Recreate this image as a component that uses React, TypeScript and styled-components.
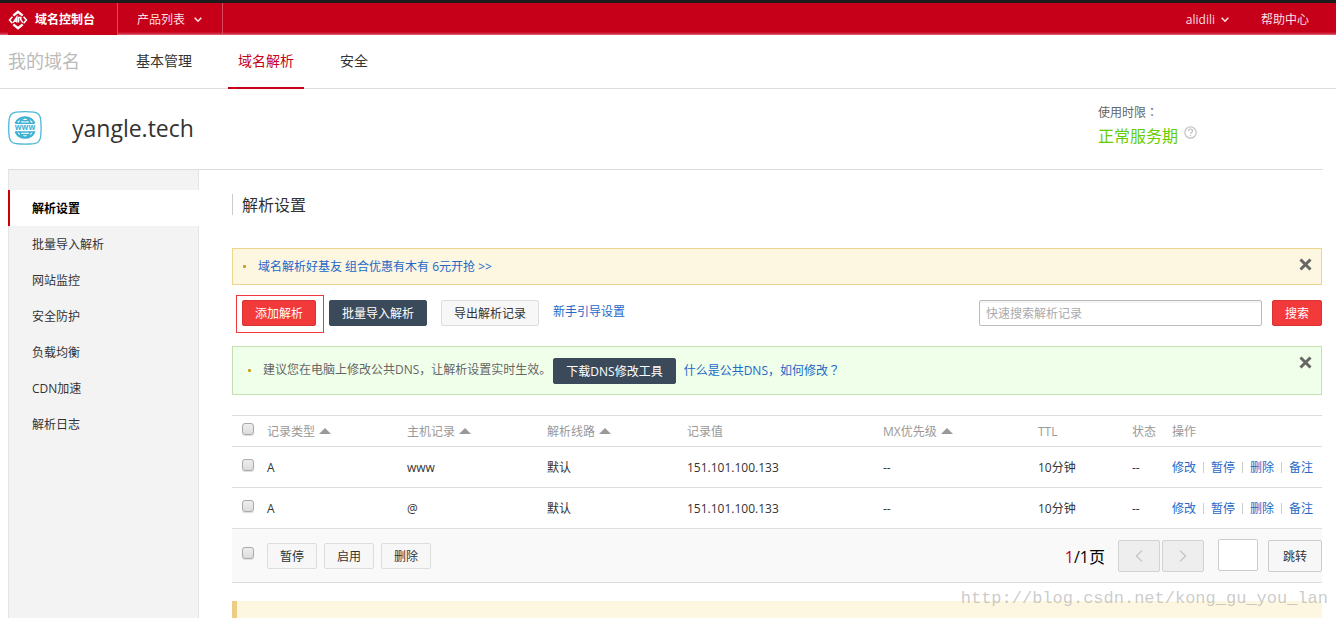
import React from "react";
import styled, { createGlobalStyle } from "styled-components";

const Global = createGlobalStyle`
  *, *::before, *::after { box-sizing: border-box; }
  html { background: #fff; }
  body { margin: 0; }
  body, button, input {
    font-family: "Open Sans", "Noto Sans CJK SC", sans-serif;
    font-size: 12px;
    line-height: 18px;
    color: #333;
  }
  a { color: #2468c8; text-decoration: none; }
  h1, h2, p, ul { margin: 0; padding: 0; font-weight: 400; list-style: none; }
`;

const Page = styled.div`
  position: relative;
  display: flex;
  flex-direction: column;
  min-height: 100vh;
  overflow: hidden;
`;

const TopBar = styled.header`
  display: flex;
  align-items: stretch;
  height: 35px;
  border-top: 3px solid #1c1c1c;
  background: linear-gradient(#c70019 29px, #d43c50 31px, #df7280 32px);
`;

const Brand = styled.a`
  display: flex;
  align-items: center;
  gap: 7px;
  margin-left: 8px;
  padding: 1px 22px 0 0;
  border-right: 1px solid #d94a5c;
  background: #c70019;
  color: #fff;
  font-weight: 700;
`;

const TopMenu = styled.button`
  display: flex;
  align-items: center;
  gap: 9px;
  padding: 2px 20px 0 19px;
  border: 0;
  border-right: 1px solid #d94a5c;
  background: none;
  color: #f9dfe2;
`;

const TopRight = styled.div`
  display: flex;
  align-items: center;
  gap: 32px;
  margin-left: auto;
  padding: 2px 27px 0 0;
`;

const UserMenu = styled.button`
  display: flex;
  align-items: center;
  gap: 6px;
  padding: 0;
  border: 0;
  background: none;
  color: #f9dfe2;
`;

const HelpLink = styled.a`
  color: #f9dfe2;
`;

const NavBar = styled.nav`
  display: flex;
  height: 54px;
  padding-left: 8px;
  border-bottom: 1px solid #ddd;
`;

const NavTitle = styled.span`
  width: 118px;
  color: #bbb;
  font-size: 18px;
  line-height: 52px;
`;

const Tabs = styled.div`
  display: flex;
  gap: 26px;
  margin-bottom: -1px;
`;

const Tab = styled.a<{ $active?: boolean }>`
  padding: 0 10px;
  border-bottom: 2px solid ${(p) => (p.$active ? "#c70019" : "transparent")};
  color: ${(p) => (p.$active ? "#c70019" : "#333")};
  font-size: 14px;
  line-height: 52px;
`;

const DomainHeader = styled.section`
  display: flex;
  align-items: flex-start;
  height: 81px;
  margin: 0 13px 0 8px;
  border-bottom: 1px solid #ddd;
`;

const DomainName = styled.div`
  display: flex;
  flex: 1;
  align-items: center;
  gap: 30px;
  height: 77px;

  h1 {
    font-size: 23px;
    line-height: 32px;
  }
`;

const Period = styled.div`
  width: 225px;
  padding-top: 14px;
  color: #666;
`;

const PeriodStatus = styled.div`
  display: flex;
  align-items: flex-start;
  gap: 6px;
  padding-top: 2px;
  color: #6c0;
  font-size: 16px;
  line-height: 24px;

  svg { margin-top: 2px; }
`;

const Body = styled.div`
  display: flex;
  flex: 1;
  margin: 0 14px 0 8px;
`;

const Sidebar = styled.ul`
  flex: none;
  width: 191px;
  && { padding-top: 20px; }
  border: solid #e4e4e4;
  border-width: 0 1px;
  background: #f3f3f3;
`;

const SideItem = styled.li<{ $active?: boolean }>`
  margin: 0 -1px;
  border-left: 2px solid ${(p) => (p.$active ? "#c00" : "transparent")};
  background: ${(p) => (p.$active ? "#fff" : "transparent")};

  a {
    display: block;
    padding: 2px 0 0 22px;
    color: ${(p) => (p.$active ? "#000" : "#333")};
    font-weight: ${(p) => (p.$active ? 700 : 400)};
    line-height: 34px;
  }
`;

const Main = styled.main`
  flex: 1;
  min-width: 0;
  padding: 24px 0 0 33px;
`;

const Heading = styled.h2`
  && { padding-left: 9px; }
  height: 21px;
  margin-bottom: 33px;
  border-left: 1px solid #ccc;
  font-size: 16px;
  line-height: 23px;
`;

const Notice = styled.div<{ $tone: "warm" | "green" }>`
  display: flex;
  align-items: center;
  min-height: ${(p) => (p.$tone === "warm" ? 37 : 49)}px;
  padding: 0 9px ${(p) => (p.$tone === "warm" ? 0 : 1)}px ${(p) => (p.$tone === "warm" ? 10 : 15)}px;
  border: 1px solid ${(p) => (p.$tone === "warm" ? "#ecd58c" : "#c4dfb0")};
  background: ${(p) => (p.$tone === "warm" ? "#fdf6e0" : "#f0ffea")};
  color: #666;

  &::before {
    content: "";
    flex: none;
    width: 3px;
    height: 3px;
    margin-right: 12px;
    border-radius: 1px;
    background: #cf9f1c;
  }
`;

const CloseButton = styled.button`
  display: flex;
  align-self: flex-start;
  margin: 9px 0 0 auto;
  padding: 0;
  border: 0;
  background: none;
`;

const CenteredMark = styled.span`
  font-family: "Noto Sans CJK TC", sans-serif;
`;

const tones = {
  red: ["#f23a3a", "#d83232", "#fff"],
  dark: ["#3b4a5b", "#3b4a5b", "#fff"],
  plain: ["#f7f7f7", "#ddd", "#333"],
};

const Button = styled.button<{ $tone: keyof typeof tones }>`
  height: 26px;
  padding: 2px 12px 0;
  border: 1px solid ${(p) => tones[p.$tone][1]};
  border-radius: 2px;
  background: ${(p) => tones[p.$tone][0]};
  color: ${(p) => tones[p.$tone][2]};
  line-height: 22px;
  white-space: nowrap;
`;

const Toolbar = styled.div`
  display: flex;
  align-items: center;
  height: 38px;
  margin: 10px 0 13px;
  padding-left: 4px;
`;

const Highlight = styled.div`
  height: 38px;
  margin-right: 5px;
  padding: 4px 7px 6px 5px;
  border: 1px solid #f0383c;
`;

const ToolGroup = styled.div`
  display: flex;
  gap: 14px;
  height: 28px;
`;

const GuideLink = styled.a`
  line-height: 24px;
`;

const Search = styled.form`
  display: flex;
  gap: 10px;
  height: 28px;
  margin-left: auto;
`;

const SearchInput = styled.input`
  width: 283px;
  height: 26px;
  padding: 0 6px;
  border: 1px solid #bbb;
  border-radius: 2px;
  background: #fff;
  box-shadow: inset 0 2px 0 #f4f4f4;

  &::placeholder { color: #aaa; opacity: 1; }
`;

const DnsTool = styled.div`
  display: flex;
  align-items: center;
  gap: 8px;
  padding-left: 2px;

  button { margin-top: 2px; }
`;

const Table = styled.table`
  width: 100%;
  margin: 20px 0 18px;
  border-collapse: collapse;
  table-layout: fixed;

  th, td {
    padding: 0;
    border: solid #ddd;
    border-width: 1px 0;
    font-weight: 400;
    text-align: left;
    white-space: nowrap;
  }
  th { height: 31px; padding-top: 2px; color: #999; }
  tbody td { height: 41px; padding-top: 1px; }
  tfoot td { height: 54px; background: #f9f9f9; }
`;

const Checkbox = styled.input`
  display: block;
  appearance: none;
  width: 12px;
  height: 12px;
  margin: 0 0 6px 10px;
  border: 1px solid #aaa;
  border-radius: 3px;
  background: linear-gradient(#eee, #dcdcdc);
  box-shadow: 0 1px 1px #ddd;
`;

const SortLabel = styled.span`
  display: inline-flex;
  align-items: center;
  gap: 4px;

  svg { margin-bottom: 2px; }
`;

const Actions = styled.div`
  display: flex;
  align-items: center;

  a + a::before {
    content: "";
    display: inline-block;
    width: 1px;
    height: 11px;
    margin: 0 7px;
    background: #ccc;
    vertical-align: -1px;
  }
`;

const FooterRow = styled.div`
  display: flex;
  align-items: center;
  gap: 7px;
`;

const Pager = styled.div`
  display: flex;
  align-items: center;
  gap: 2px;
  margin-left: auto;
`;

const PageCount = styled.span`
  margin-right: 11px;
  padding-top: 2px;
  color: #000;
  font-size: 16px;
  line-height: 24px;

  em { color: #c70019; font-style: normal; }
`;

const PageButton = styled.button<{ $off?: boolean }>`
  display: flex;
  align-items: center;
  justify-content: center;
  width: ${(p) => (p.$off ? 42 : 54)}px;
  height: 32px;
  padding: ${(p) => (p.$off ? 0 : 2)}px 0 0;
  border: 1px solid ${(p) => (p.$off ? "#d2d2d2" : "#ccc")};
  border-radius: 2px;
  background: ${(p) => (p.$off ? "#eee" : "#f7f7f7")};
`;

const PageInput = styled.input`
  width: 40px;
  height: 32px;
  margin: 0 8px 2px 12px;
  border: 1px solid #ccc;
  border-radius: 2px;
  background: #fff;
`;

const TipBlock = styled.div`
  min-height: 17px;
  border-left: 5px solid #eccd83;
  background: #fdf6e0;
`;

const Watermark = styled.span`
  position: absolute;
  right: 8px;
  bottom: 7px;
  color: rgba(160, 160, 160, 0.55);
  font: 17px/24px "Liberation Mono", monospace;
  pointer-events: none;
`;

const Chevron = () => (
  <svg width="8" height="6" viewBox="0 0 8 6" fill="none" stroke="#fbe5e8" strokeWidth="1.6">
    <path d="M.7 .8 4 4.2 7.3 .8" />
  </svg>
);

const Logo = () => (
  <svg width="20" height="20" viewBox="0 0 20 20" fill="none" stroke="#fff">
    <path d="M5.3 5.6 10 1.8l4.7 3.8M5.3 14.4l4.7 3.8 4.7-3.800" strokeWidth="2.4" />
    <path d="M4.400 6.800 1.600 10l2.800 3.200M15.600 6.800l2.800 3.200-2.800 3.200" strokeWidth="1.6" />
    <path d="M5.200 12.600 8.800 7.200v5.400M6.400 11.200h2.400M10.600 12.600V7.400h2.200v2.400l2 2.800" strokeWidth="1.500" />
  </svg>
);

const DomainIcon = () => (
  <svg width="34" height="34" viewBox="0 0 34 34" fill="none">
    <path d="M8 1.2q9-1 18 0 5.8.8 6.6 6.8 1 9 0 18-.8 5.8-6.6 6.6-9 1-18 0-6-.8-6.8-6.6-1-9 0-18Q2 2 8 1.200Z" stroke="#4cb8d6" strokeWidth="1.3" />
    <g stroke="#3fb2d3" strokeWidth="2">
      <path d="M7.500 12.500A10.300 10.300 0 0 1 26.500 12.500M7.500 20.500A10.300 10.300 0 0 0 26.500 20.500" />
      <path d="M7.500 12.200h19M7.500 21h19" strokeWidth="1.600" />
      <path d="M11.600 12.500q1.400-4.800 5.400-6 4 1.200 5.400 6M11.600 20.500q1.400 4.800 5.400 6 4-1.200 5.400-6" strokeWidth="1.700" />
      <path d="M11 8.600q6 2.400 12 0M11 24.600q6-2.400 12 0" strokeWidth="1.500" />
    </g>
    <text x="17" y="19" textAnchor="middle" fill="#3fb2d3" fontFamily="Open Sans" fontWeight="700" fontSize="8">www</text>
  </svg>
);

const HelpIcon = () => (
  <svg width="13" height="13" viewBox="0 0 13 13" fill="none" stroke="#c4c4c4">
    <circle cx="6.500" cy="6.500" r="5.700" strokeWidth="1.200" />
    <path d="M4.500 5.200q0-2 2-2t2 1.800q0 1-1.200 1.700-.8.500-.8 1.300M6.500 9v1.300" strokeWidth="1.200" />
  </svg>
);

const CloseIcon = () => (
  <svg width="13" height="13" viewBox="0 0 13 13" fill="none" stroke="#666" strokeWidth="3">
    <path d="M1.500 1.500l10 10M11.500 1.500l-10 10" />
  </svg>
);

const SortIcon = () => (
  <svg width="12" height="6" viewBox="0 0 12 6" fill="#999">
    <path d="M0 6 6 0l6 6Z" />
  </svg>
);

const Arrow = ({ next }: { next?: boolean }) => (
  <svg width="8" height="12" viewBox="0 0 8 12" fill="none" stroke="#c4c4c4" strokeWidth="1.300">
    <path d={next ? "M1 .6 6.600 6 1 11.400" : "M7 .6 1.400 6 7 11.400"} />
  </svg>
);

const sideItems = ["解析设置", "批量导入解析", "网站监控", "安全防护", "负载均衡", "CDN加速", "解析日志"];
const columns = [
  { label: "记录类型", width: 140, sort: true },
  { label: "主机记录", width: 140, sort: true },
  { label: "解析线路", width: 140, sort: true },
  { label: "记录值" },
  { label: "MX优先级", width: 155, sort: true },
  { label: "TTL", width: 94 },
  { label: "状态", width: 40 },
  { label: "操作", width: 150 },
];
const records = [
  ["A", "www", "默认", "151.101.100.133", "--", "10分钟", "--"],
  ["A", "@", "默认", "151.101.100.133", "--", "10分钟", "--"],
];

export default function App() {
  return (
    <Page>
      <Global />
      <TopBar>
        <Brand href="#"><Logo />域名控制台</Brand>
        <TopMenu type="button">产品列表<Chevron /></TopMenu>
        <TopRight>
          <UserMenu type="button">alidili<Chevron /></UserMenu>
          <HelpLink href="#">帮助中心</HelpLink>
        </TopRight>
      </TopBar>

      <NavBar>
        <NavTitle>我的域名</NavTitle>
        <Tabs>
          <Tab href="#">基本管理</Tab>
          <Tab href="#" $active>域名解析</Tab>
          <Tab href="#">安全</Tab>
        </Tabs>
      </NavBar>

      <DomainHeader>
        <DomainName>
          <DomainIcon />
          <h1>yangle.tech</h1>
        </DomainName>
        <Period>
          <p>使用时限<CenteredMark lang="zh-TW">：</CenteredMark></p>
          <PeriodStatus>正常服务期<HelpIcon /></PeriodStatus>
        </Period>
      </DomainHeader>

      <Body>
        <Sidebar>
          {sideItems.map((item, i) => (
            <SideItem key={item} $active={i === 0}><a href="#">{item}</a></SideItem>
          ))}
        </Sidebar>

        <Main>
          <Heading>解析设置</Heading>

          <Notice $tone="warm">
            <a href="#">域名解析好基友 组合优惠有木有 6元开抢 &gt;&gt;</a>
            <CloseButton type="button" aria-label="关闭"><CloseIcon /></CloseButton>
          </Notice>

          <Toolbar>
            <Highlight><Button type="button" $tone="red">添加解析</Button></Highlight>
            <ToolGroup>
              <Button type="button" $tone="dark">批量导入解析</Button>
              <Button type="button" $tone="plain">导出解析记录</Button>
              <GuideLink href="#">新手引导设置</GuideLink>
            </ToolGroup>
            <Search onSubmit={(e) => e.preventDefault()}>
              <SearchInput type="text" aria-label="快速搜索解析记录" placeholder="快速搜索解析记录" />
              <Button type="submit" $tone="red">搜索</Button>
            </Search>
          </Toolbar>

          <Notice $tone="green">
            <span>建议您在电脑上修改公共DNS，让解析设置实时生效。</span>
            <DnsTool>
              <Button type="button" $tone="dark">下载DNS修改工具</Button>
              <a href="#">什么是公共DNS，如何修改<CenteredMark lang="zh-TW">？</CenteredMark></a>
            </DnsTool>
            <CloseButton type="button" aria-label="关闭"><CloseIcon /></CloseButton>
          </Notice>

          <Table>
            <colgroup>
              <col width={35} />
              {columns.map((c) => <col key={c.label} width={c.width} />)}
            </colgroup>
            <thead>
              <tr>
                <th><Checkbox type="checkbox" aria-label="全选" /></th>
                {columns.map((c) => (
                  <th key={c.label}>
                    <SortLabel>{c.label}{c.sort && <SortIcon />}</SortLabel>
                  </th>
                ))}
              </tr>
            </thead>
            <tbody>
              {records.map((r) => (
                <tr key={r[1]}>
                  <td><Checkbox type="checkbox" aria-label={r[1]} /></td>
                  {r.map((v, i) => <td key={i}>{v}</td>)}
                  <td>
                    <Actions>
                      <a href="#">修改</a><a href="#">暂停</a><a href="#">删除</a><a href="#">备注</a>
                    </Actions>
                  </td>
                </tr>
              ))}
            </tbody>
            <tfoot>
              <tr>
                <td><Checkbox type="checkbox" aria-label="全选" /></td>
                <td colSpan={8}>
                  <FooterRow>
                    <Button type="button" $tone="plain">暂停</Button>
                    <Button type="button" $tone="plain">启用</Button>
                    <Button type="button" $tone="plain">删除</Button>
                    <Pager>
                      <PageCount><em>1</em>/1页</PageCount>
                      <PageButton type="button" $off aria-label="上一页"><Arrow /></PageButton>
                      <PageButton type="button" $off aria-label="下一页"><Arrow next /></PageButton>
                      <PageInput type="text" aria-label="页码" />
                      <PageButton type="button">跳转</PageButton>
                    </Pager>
                  </FooterRow>
                </td>
              </tr>
            </tfoot>
          </Table>

          <TipBlock />
        </Main>
      </Body>

      <Watermark>http://blog.csdn.net/kong_gu_you_lan</Watermark>
    </Page>
  );
}
